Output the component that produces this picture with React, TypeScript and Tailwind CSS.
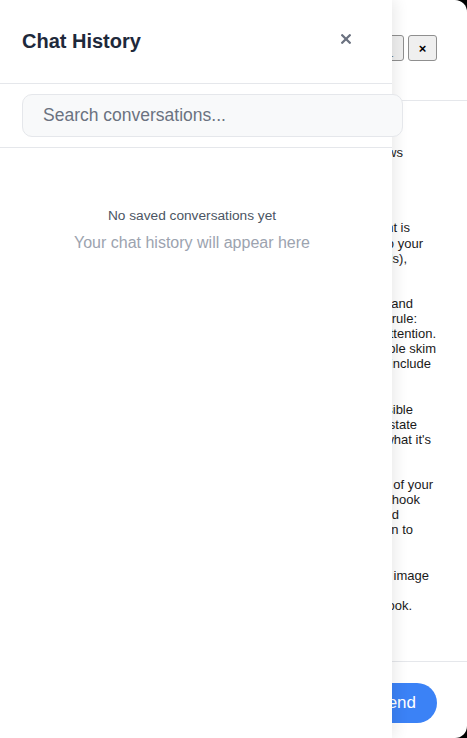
import React from "react";

// visible tail of each line in the reply behind the drawer, right-anchored
const lines: { t: string; pr: string }[] = [
  { t: "Here is how the layout follows", pr: "pr-[64px]" },
  { t: "", pr: "" },
  { t: "", pr: "" },
  { t: "", pr: "" },
  { t: "", pr: "" },
  { t: "The first thing to get right is", pr: "pr-[57px]" },
  { t: "the headline, it speaks to your", pr: "pr-[44px]" },
  { t: "readers (and their needs),", pr: "pr-[60px]" },
  { t: "", pr: "" },
  { t: "", pr: "" },
  { t: "Keep it short, specific and", pr: "pr-[54px]" },
  { t: "concrete. A good rule:", pr: "pr-[50px]" },
  { t: "lead with what earns attention.", pr: "pr-[31px]" },
  { t: "Most people skim", pr: "pr-[31px]" },
  { t: "the opening, so it should include", pr: "pr-[36px]" },
  { t: "", pr: "" },
  { t: "", pr: "" },
  { t: "Make the value as visible", pr: "pr-[54px]" },
  { t: "as possible, and clearly state", pr: "pr-[50px]" },
  { t: "what the reader gets and what it's", pr: "pr-[36px]" },
  { t: "", pr: "" },
  { t: "", pr: "" },
  { t: "Then use the first line of your", pr: "pr-[34px]" },
  { t: "post as a hook", pr: "pr-[47px]" },
  { t: "that is short and", pr: "pr-[68px]" },
  { t: "gives the reader a reason to", pr: "pr-[54px]" },
  { t: "", pr: "" },
  { t: "", pr: "" },
  { t: "Finally, add a strong cover image", pr: "pr-[38px]" },
  { t: "", pr: "" },
  { t: "that fits the overall look.", pr: "pr-[55px]" },
];

function ChatPanel() {
  return (
    <div className="flex h-full w-full flex-col rounded-r-[12px] bg-white">
      <div className="flex h-[101px] shrink-0 items-start justify-end gap-[4px] border-b border-[#e5e7eb] pr-[30px] pt-[35px]">
        <button className="flex h-[26px] w-[29px] items-end justify-center rounded-[3px] border border-[#8f8f8f] bg-[#efefef] pb-[3px] text-[12px] font-bold leading-none text-black">
          _
        </button>
        <button className="flex h-[26px] w-[29px] items-center justify-center rounded-[3px] border border-[#8f8f8f] bg-[#efefef] text-[13px] font-bold leading-none text-black">
          ×
        </button>
      </div>
      <div className="flex-1 overflow-hidden pt-[44px]">
        {lines.map((l, i) => (
          <div
            key={i}
            className={`h-[15.1px] overflow-hidden whitespace-nowrap text-right text-[13px] leading-[15.1px] text-[#1a1a1a] ${l.pr}`}
          >
            {l.t}
          </div>
        ))}
      </div>
      <div className="flex h-[77px] shrink-0 items-center justify-end border-t border-[#e5e7eb] pr-[30px] pt-[6px]">
        <button className="h-[40px] rounded-full bg-[#3b82f6] px-[21px] text-[17px] text-white">
          Send
        </button>
      </div>
    </div>
  );
}

function HistoryDrawer() {
  return (
    <aside className="absolute left-0 top-0 z-10 flex h-full w-[392px] flex-col bg-white shadow-[3px_0_14px_rgba(0,0,0,0.09)]">
      <div className="flex h-[84px] shrink-0 items-center justify-between border-b border-[#e5e7eb] pl-[22px] pr-[30px]">
        <h2 className="text-[20px] font-bold leading-[23px] text-[#1e293b]">Chat History</h2>
        <button className="-mt-[5px] flex h-8 w-8 items-center justify-center text-[#6b7280]" aria-label="Close">
          <svg width="10" height="10" viewBox="0 0 10 10" fill="none" stroke="currentColor" strokeWidth="2.3" strokeLinecap="round">
            <line x1="1.2" y1="1.2" x2="8.8" y2="8.8" />
            <line x1="8.8" y1="1.2" x2="1.2" y2="8.8" />
          </svg>
        </button>
      </div>
      <div className="shrink-0 border-b border-[#e5e7eb] px-[22px] py-[10px]">
        <input
          type="text"
          placeholder="Search conversations..."
          className="h-[43px] w-[381px] rounded-[10px] border border-[#e5e7eb] bg-[#f8f9fa] pl-[20px] text-[17.5px] text-[#111827] outline-none placeholder:text-[#6b7280]"
        />
      </div>
      <div className="flex flex-col items-center pr-[8px] pt-[60px]">
        <p className="text-[13.7px] leading-[16px] text-[#4b5563]">No saved conversations yet</p>
        <p className="mt-[9px] text-[16px] leading-[20px] text-[#9ca3af]">Your chat history will appear here</p>
      </div>
    </aside>
  );
}

export default function App() {
  return (
    <div className="relative h-[738px] w-[467px] overflow-hidden bg-black font-['Liberation_Sans',Arial,sans-serif]">
      <ChatPanel />
      <HistoryDrawer />
    </div>
  );
}
